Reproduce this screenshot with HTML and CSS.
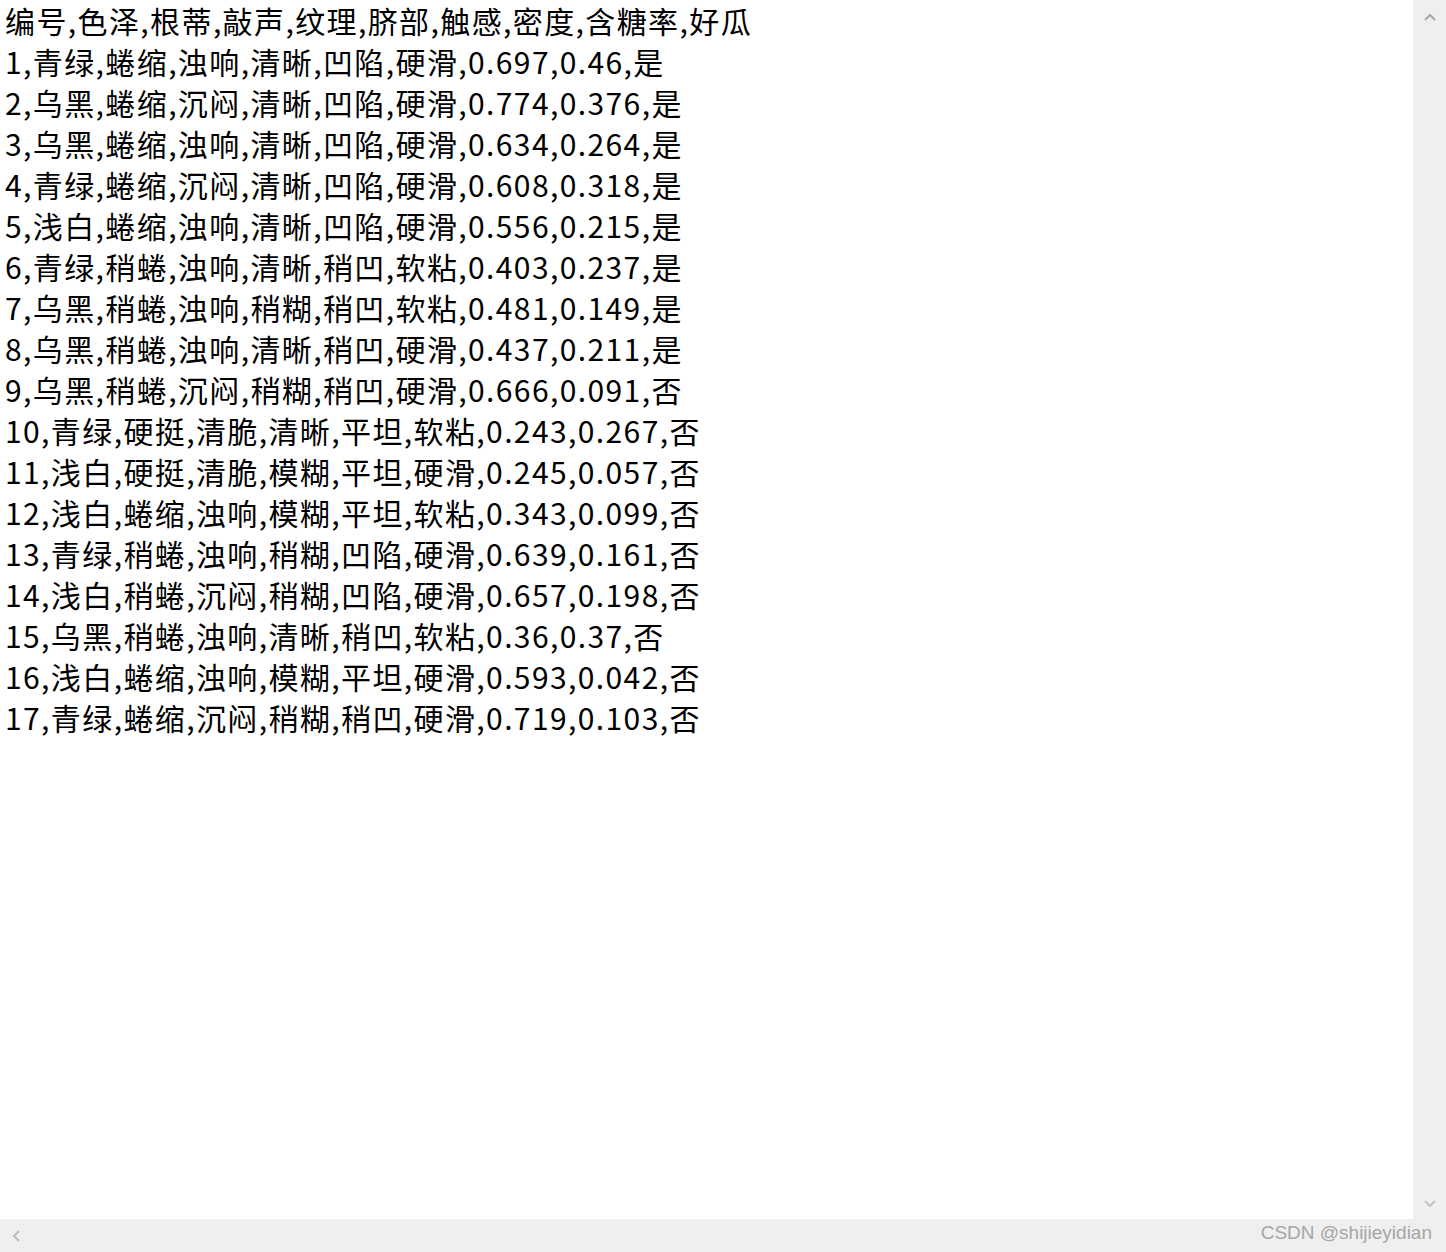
FILE: index.html
```html
<!DOCTYPE html>
<html lang="zh-CN">
<head>
    <meta charset="UTF-8">
    <title>watermelon.csv</title>
    <link rel="stylesheet" href="styles.css">
</head>
<body>
    <div class="window">
        <div class="main">
            <pre class="text">编号,色泽,根蒂,敲声,纹理,脐部,触感,密度,含糖率,好瓜
1,青绿,蜷缩,浊响,清晰,凹陷,硬滑,0.697,0.46,是
2,乌黑,蜷缩,沉闷,清晰,凹陷,硬滑,0.774,0.376,是
3,乌黑,蜷缩,浊响,清晰,凹陷,硬滑,0.634,0.264,是
4,青绿,蜷缩,沉闷,清晰,凹陷,硬滑,0.608,0.318,是
5,浅白,蜷缩,浊响,清晰,凹陷,硬滑,0.556,0.215,是
6,青绿,稍蜷,浊响,清晰,稍凹,软粘,0.403,0.237,是
7,乌黑,稍蜷,浊响,稍糊,稍凹,软粘,0.481,0.149,是
8,乌黑,稍蜷,浊响,清晰,稍凹,硬滑,0.437,0.211,是
9,乌黑,稍蜷,沉闷,稍糊,稍凹,硬滑,0.666,0.091,否
10,青绿,硬挺,清脆,清晰,平坦,软粘,0.243,0.267,否
11,浅白,硬挺,清脆,模糊,平坦,硬滑,0.245,0.057,否
12,浅白,蜷缩,浊响,模糊,平坦,软粘,0.343,0.099,否
13,青绿,稍蜷,浊响,稍糊,凹陷,硬滑,0.639,0.161,否
14,浅白,稍蜷,沉闷,稍糊,凹陷,硬滑,0.657,0.198,否
15,乌黑,稍蜷,浊响,清晰,稍凹,软粘,0.36,0.37,否
16,浅白,蜷缩,浊响,模糊,平坦,硬滑,0.593,0.042,否
17,青绿,蜷缩,沉闷,稍糊,稍凹,硬滑,0.719,0.103,否</pre>
            <div class="vscroll">
                <svg class="arrow" width="12" height="8" viewBox="0 0 12 8"><path d="M1 7 L6 2 L11 7" fill="none" stroke="#a8a8a8" stroke-width="2"/></svg>
                <svg class="arrow" width="12" height="8" viewBox="0 0 12 8"><path d="M1 1 L6 6 L11 1" fill="none" stroke="#c4c4c4" stroke-width="2"/></svg>
            </div>
        </div>
        <div class="hscroll">
            <svg class="arrow" width="8" height="12" viewBox="0 0 8 12"><path d="M7 1 L2 6 L7 11" fill="none" stroke="#bdbdbd" stroke-width="2"/></svg>
            <span class="mark">CSDN @shijieyidian</span>
        </div>
    </div>
</body>
</html>
```

FILE: styles.css
```css
html, body {
    margin: 0;
    padding: 0;
    background: #ffffff;
}
.window {
    display: flex;
    flex-direction: column;
    width: 1446px;
    height: 1252px;
    overflow: hidden;
}
.main {
    display: flex;
    flex: 1;
    min-height: 0;
}
.text {
    flex: 1;
    margin: 0;
    padding: 0 0 0 5px;
    font-family: "Noto Sans CJK SC", "Microsoft YaHei", sans-serif;
    font-size: 30px;
    line-height: 41px;
    letter-spacing: 1.4px;
    color: #000000;
    white-space: pre;
}
.vscroll {
    width: 33px;
    background: #efefef;
    display: flex;
    flex-direction: column;
    justify-content: space-between;
    align-items: center;
    padding: 13px 0 11px;
}
.hscroll {
    height: 33px;
    background: #efefef;
    display: flex;
    align-items: center;
    justify-content: space-between;
    padding: 0 14px 0 12px;
}
.hscroll .arrow {
    margin-top: 1px;
}
.mark {
    margin-bottom: 6px;
    font-family: "Liberation Sans", Arial, sans-serif;
    font-size: 19px;
    color: #a6a6a6;
}
```
